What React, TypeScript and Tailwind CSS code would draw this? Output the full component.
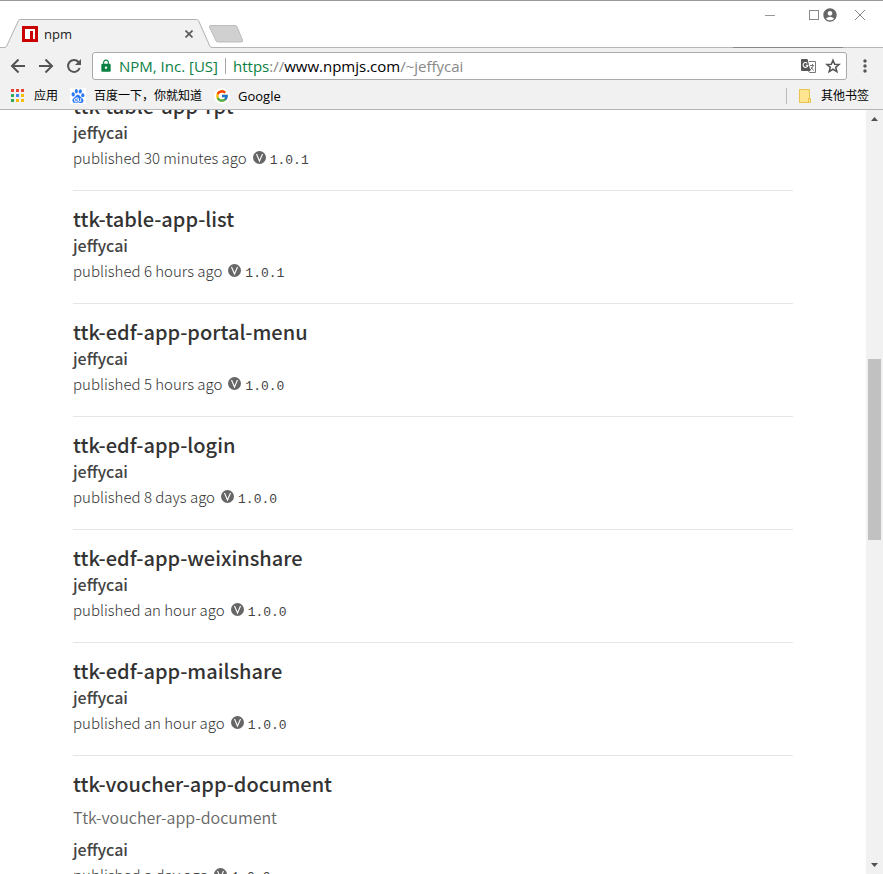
import type { ReactNode } from 'react';
import { MdAccountCircle, MdLock, MdMoreVert } from 'react-icons/md';
import { FcGoogle } from 'react-icons/fc';
import { SiBaidu } from 'react-icons/si';

type Pkg = { name: string; description?: string; published: string; version: string };

const packages: Pkg[] = [
  { name: 'ttk-table-app-rpt', published: '30 minutes ago', version: '1.0.1' },
  { name: 'ttk-table-app-list', published: '6 hours ago', version: '1.0.1' },
  { name: 'ttk-edf-app-portal-menu', published: '5 hours ago', version: '1.0.0' },
  { name: 'ttk-edf-app-login', published: '8 days ago', version: '1.0.0' },
  { name: 'ttk-edf-app-weixinshare', published: 'an hour ago', version: '1.0.0' },
  { name: 'ttk-edf-app-mailshare', published: 'an hour ago', version: '1.0.0' },
  {
    name: 'ttk-voucher-app-document',
    description: 'Ttk-voucher-app-document',
    published: 'a day ago',
    version: '1.0.0',
  },
];

function TabStrip() {
  return (
    <div className="relative flex h-12 shrink-0 items-end border-t border-t-[#999] border-b border-b-[#b6b4b6] bg-white">
      <span className="absolute right-10 -bottom-px h-px w-[110px] bg-[#888]" />
      <div className="relative -mb-px ml-[5px] flex h-[29px] w-[207px] shrink-0 items-center pr-[15px] pl-[17px]">
        <svg className="absolute inset-0" width="207" height="29" viewBox="0 0 207 29" aria-hidden="true">
          <path d="M0 29V28.5L1.5 27.5L13.5 1.5Q14 .5 15 .5H191.5Q193 .5 193.5 1.5L205 27.5L207 28.5V29Z" fill="#f1f1f1" />
          <path d="M0 28.5L1.5 27.5L13.5 1.5Q14 .5 15 .5H191.5Q193 .5 193.5 1.5L205 27.5L207 28.5" fill="none" stroke="#b0b0b0" />
        </svg>
        <svg className="relative shrink-0" width="16" height="16" viewBox="0 0 16 16" aria-hidden="true">
          <path fill="#cb0000" d="M0 0h16v16H0z" />
          <path fill="#fff" d="M3 3h10v10h-2V5H8v8H3z" />
        </svg>
        <span className="relative ml-[6px] flex-1 text-[13px] leading-4 text-[#222]">npm</span>
        <button type="button" aria-label="Close tab" className="relative flex size-4 items-center justify-center">
          <svg width="8" height="8" viewBox="0 0 8 8" aria-hidden="true">
            <path d="M.5.5L7.5 7.5M7.5.5L.5 7.5" stroke="#5a5a5a" strokeWidth="1.7" />
          </svg>
        </button>
      </div>
      <button type="button" aria-label="New tab" className="mb-1 -ml-1 shrink-0">
        <svg width="36" height="18" viewBox="0 0 36 18" aria-hidden="true">
          <path d="M2.5.5H27Q28.5.5 29 1.5L34.5 15Q35 17 33.5 17H10Q8.5 17 8 16L1.5 2Q1 .5 2.5.5Z" fill="#d0d0d0" stroke="#bdbdbd" />
        </svg>
      </button>
      <div className="ml-auto flex h-full items-start pt-[7px] pr-[17px]">
        <button type="button" aria-label="Minimize" className="mr-[34px] flex h-[14px] items-center">
          <span className="block h-px w-[10px] bg-[#999]" />
        </button>
        <button type="button" aria-label="Maximize" className="mr-[3px] flex h-[14px] items-center">
          <span className="block size-[10px] border border-[#888]" />
        </button>
        <button type="button" aria-label="Profile" className="mr-4 flex h-[14px] items-center">
          <MdAccountCircle className="size-4 text-[#666]" />
        </button>
        <button type="button" aria-label="Close window" className="flex h-[14px] items-center">
          <svg width="12" height="12" viewBox="0 0 12 12" aria-hidden="true">
            <path d="M1 1L11 11M11 1L1 11" stroke="#888" />
          </svg>
        </button>
      </div>
    </div>
  );
}

function ToolButton({ label, children }: { label: string; children: ReactNode }) {
  return (
    <button type="button" aria-label={label} className="flex size-7 shrink-0 items-center justify-center text-[#555]">
      {children}
    </button>
  );
}

function TranslateIcon() {
  return (
    <svg width="15" height="15" viewBox="0 0 15 15" aria-hidden="true">
      <path d="M8 2.5H14.5V13.5H8.5L7 11.5" fill="#fff" stroke="#777" />
      <path d="M9 6.5H13M11.5 5V6.5M12.3 6.5Q11.5 9 9 11M10 8L12.5 11.500" fill="none" stroke="#777" />
      <path d="M1 0H6.500L9.500 12H1Q0 12 0 11V1Q0 0 1 0Z" fill="#555" />
      <path d="M6.300 4.300A2.400 2.400 0 1 0 6.900 6.300H4.700" fill="none" stroke="#fff" strokeWidth="1.100" />
    </svg>
  );
}

function Toolbar() {
  return (
    <div className="flex h-[35px] shrink-0 items-center bg-[#f1f1f1] pt-px pl-1">
      <ToolButton label="Back">
        <svg width="16" height="16" viewBox="0 0 16 16" fill="none" stroke="currentColor" strokeWidth="2" aria-hidden="true">
          <path d="M8.5 1.5L2 8L8.5 14.5M2 8H15" />
        </svg>
      </ToolButton>
      <ToolButton label="Forward">
        <svg width="16" height="16" viewBox="0 0 16 16" fill="none" stroke="currentColor" strokeWidth="2" aria-hidden="true">
          <path d="M7.5 1.5L14 8L7.5 14.5M14 8H1" />
        </svg>
      </ToolButton>
      <ToolButton label="Reload">
        <svg width="16" height="16" viewBox="0 0 16 16" fill="none" stroke="currentColor" strokeWidth="2" aria-hidden="true">
          <path d="M13 4.5A6 6 0 1 0 13.700 10" />
          <path d="M15 1V7H9Z" fill="currentColor" stroke="none" />
        </svg>
      </ToolButton>
      <div className="ml-1 flex h-7 min-w-0 flex-1 items-center rounded-[3px] border border-[#aaa] bg-white pr-[5px] pl-[6px] text-[15px] leading-5">
        <MdLock size={14} className="shrink-0 text-[#0b8043]" />
        <span className="ml-[6px] shrink-0 text-[#0b8043]">NPM, Inc. [US]</span>
        <span className="mx-[7px] h-4 w-px shrink-0 bg-[#a5a5a5]" />
        <div role="textbox" aria-label="Address" tabIndex={0} className="min-w-0 flex-1 truncate text-[#888]">
          <span className="text-[#0b8043]">https</span>://<span className="text-black">www.npmjs.com</span>/~jeffycai
        </div>
        <button type="button" aria-label="Translate this page" className="mr-[9px]">
          <TranslateIcon />
        </button>
        <button type="button" aria-label="Bookmark this page" className="text-[#555]">
          <svg width="16" height="16" viewBox="0 0 16 16" fill="none" stroke="currentColor" strokeWidth="1.6" aria-hidden="true">
            <path d="M8 2.2L9.700 6.200L14 6.500L10.700 9.300L11.800 13.600L8 11.300L4.200 13.600L5.300 9.300L2 6.500L6.300 6.200Z" />
          </svg>
        </button>
      </div>
      <div className="ml-1 flex"><ToolButton label="Menu"><MdMoreVert size={20} /></ToolButton></div>
      <div className="w-1" />
    </div>
  );
}

function AppsIcon() {
  const colors = ['#ea4335', '#ea4335', '#ea4335', '#34a853', '#4285f4', '#fbbc05', '#34a853', '#fbbc05', '#fbbc05'];
  return (
    <svg width="13" height="13" viewBox="0 0 13 13" aria-hidden="true">
      {colors.map((c, i) => (
        <rect key={i} x={(i % 3) * 5} y={Math.floor(i / 3) * 5} width="3" height="3" fill={c} />
      ))}
    </svg>
  );
}

function Bookmarks() {
  return (
    <nav aria-label="Bookmarks" className="flex h-[27px] shrink-0 items-center border-b border-[#b6b4b6] bg-[#f1f1f1] pr-[14px] pb-px pl-[11px] text-xs leading-4 text-black">
      <button type="button" className="flex items-center gap-[10px]"><AppsIcon />应用</button>
      <a href="https://www.baidu.com" className="ml-3 flex items-center gap-2">
        <span className="flex size-4 items-center justify-center bg-white"><SiBaidu size={14} className="text-[#2d78f4]" /></span>
        百度一下，你就知道
      </a>
      <a href="https://www.google.com" className="ml-3 flex items-center gap-2">
        <span className="flex size-4 items-center justify-center rounded-full bg-white"><FcGoogle size={14} /></span>
        <span className="text-[13px]">Google</span>
      </a>
      <button type="button" className="ml-auto flex h-4 items-center border-l border-[#bbb] pl-3">
        <svg width="12" height="14" viewBox="0 0 12 14" aria-hidden="true">
          <path d="M.5.5H10.5V9.5H11.5V13.5H.5Z" fill="#ffe591" stroke="#e8c44f" />
          <path d="M9.5 13V9.5H11" fill="none" stroke="#e8c44f" />
        </svg>
        <span className="ml-[10px]">其他书签</span>
      </button>
    </nav>
  );
}

function PackageItem({ pkg }: { pkg: Pkg }) {
  return (
    <li className="border-b border-[#e5e5e5] pt-[13px] pb-[17px]">
      <h3 className="text-xl leading-[30px] font-medium text-[#333]"><a href="#package">{pkg.name}</a></h3>
      {pkg.description && <p className="mb-[2px] text-base leading-[37px] font-[350] text-[#666]">{pkg.description}</p>}
      <p className="text-base leading-[22px] font-medium text-[#444]"><a href="#author">jeffycai</a></p>
      <p className="flex h-[30px] items-baseline text-[15px] leading-[30px] font-light text-[#333]">
        <span>published {pkg.published}</span>
        <svg className="mr-1 ml-[6px]" width="13" height="13" viewBox="0 0 13 13" aria-hidden="true">
          <circle cx="6.5" cy="6.5" r="6.5" fill="#666" />
          <path d="M3.5 3L6.5 10L9.5 3" fill="none" stroke="#fff" strokeWidth="1.1" />
        </svg>
        <span className="font-['Liberation_Mono',monospace] text-[13px] text-[#444]">{pkg.version}</span>
      </p>
    </li>
  );
}

function Scrollbar() {
  return (
    <div aria-hidden="true" className="flex w-[17px] shrink-0 flex-col items-center bg-[#f1f1f1] py-[7px]">
      <svg width="7" height="4" viewBox="0 0 7 4"><path d="M3.5 0L7 4H0Z" fill="#505050" /></svg>
      <div className="flex w-full flex-1 flex-col items-center">
        <div className="grow-[238]" />
        <div className="w-[13px] grow-[181] bg-[#c1c1c1]" />
        <div className="grow-[323]" />
      </div>
      <svg width="7" height="4" viewBox="0 0 7 4"><path d="M0 0H7L3.5 4Z" fill="#505050" /></svg>
    </div>
  );
}

export default function App() {
  return (
    <div className="flex h-screen flex-col overflow-hidden bg-white font-['Open_Sans','Noto_Sans_CJK_SC',sans-serif]">
      <TabStrip />
      <Toolbar />
      <Bookmarks />
      <div className="flex min-h-0 flex-1">
        <main className="min-w-0 flex-1 overflow-hidden font-['Noto_Sans_CJK_SC',sans-serif]">
          <ul className="mx-auto -mt-8 max-w-[720px]">
            {packages.map((pkg) => (
              <PackageItem key={pkg.name} pkg={pkg} />
            ))}
          </ul>
        </main>
        <Scrollbar />
      </div>
    </div>
  );
}
